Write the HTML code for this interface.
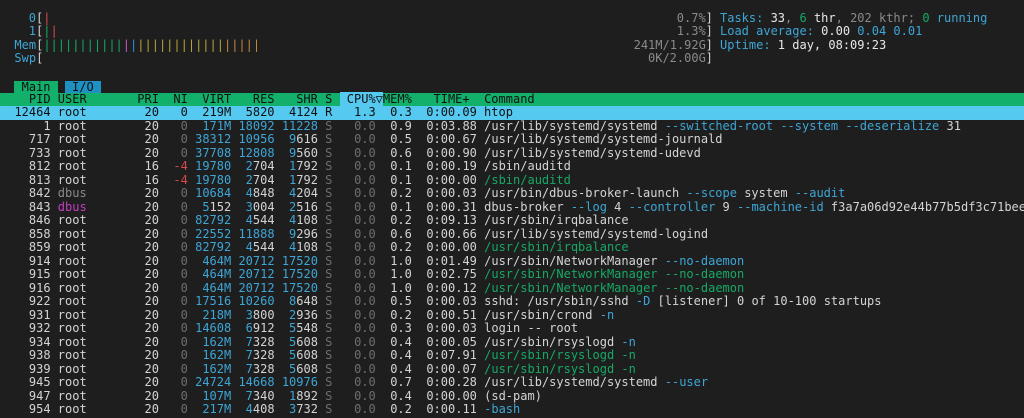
<!DOCTYPE html>
<html><head><meta charset="utf-8"><style>
html,body{margin:0;padding:0;background:#1e1e1e;width:1024px;height:418px;overflow:hidden}
body{font-family:"DejaVu Sans Mono","Liberation Mono",monospace;font-size:12px;color:#d4d4d4}
.l{position:absolute;left:0;height:13.5px;line-height:13.5px;white-space:pre;width:1024px}
.a{position:absolute;top:0;white-space:pre}
.c{color:#3ea6d6}.d{color:#6e6e6e}.g{color:#17a865}.r{color:#d84a4a}.m{color:#c23fc2}.gr{color:#8a8a8a}
.w{color:#e8e8e8}.y{color:#b4a43a}.o{color:#c0883a}.bl{color:#2f8fd0}.mg{color:#c05ac0}
.hdr{background:#13b06b;color:#101010}
.sel{background:#55c9ef;color:#101010}
</style></head><body>

<div class="l" style="top:11.5px"><span class="a" style="left:28.8px"><span class="c">0</span>[<span class="r">|</span></span><span class="a gr" style="left:676.8px">0.7%</span><span class="a" style="left:705.6px">]</span><span class="a" style="left:720px"><span class="c">Tasks: </span><span class="w">33</span><span class="gr">, </span><span class="g">6</span><span class="w"> thr</span><span class="gr">, 202 kthr; </span><span class="g">0</span><span class="c"> running</span></span></div>
<div class="l" style="top:25px"><span class="a" style="left:28.8px"><span class="c">1</span>[<span class="g">|</span><span class="r">|</span></span><span class="a gr" style="left:676.8px">1.3%</span><span class="a" style="left:705.6px">]</span><span class="a" style="left:720px"><span class="c">Load average: </span><span class="w">0.00 </span><span class="c">0.04 0.01</span></span></div>
<div class="l" style="top:38.5px"><span class="a" style="left:14.4px"><span class="c">Mem</span>[<span class="g">|||||||||||</span><span class="mg">|</span><span class="bl">|</span><span class="y">||||||||||||</span><span class="o">|||||</span></span><span class="a gr" style="left:633.6px">241M/1.92G</span><span class="a" style="left:705.6px">]</span><span class="a" style="left:720px"><span class="c">Uptime: </span><span class="w">1 day, 08:09:23</span></span></div>
<div class="l" style="top:52px"><span class="a" style="left:14.4px"><span class="c">Swp</span>[</span><span class="a gr" style="left:648px">0K/2.00G</span><span class="a" style="left:705.6px">]</span></div>

<div class="l" style="top:79px"><span class="a" style="left:14.4px;top:1.5px;height:12px;line-height:12px;width:43.2px;background:#13b06b;color:#101010"> Main</span><span class="a" style="left:64.8px;top:1.5px;height:12px;line-height:12px;width:36px;background:#1f90c2;color:#101010"> I/O</span></div>

<div class="l hdr" style="top:92.5px">    PID USER       PRI  NI  VIRT   RES   SHR S <span style="background:#55c9ef"> CPU%▽</span>MEM%   TIME+  Command</div>
<div class="l sel" style="top:106px">  12464 root        20   0  219M  5820  4124 R   1.3  0.3  0:00.09 htop</div>
<div class="l" style="top:119.5px">      1 root        20<span class="d">   0</span> <span class="c"> 171M</span> <span class="c">18092</span> <span class="c">11228</span> <span class="d">S   0.0</span>  0.9  0:03.88 /usr/lib/systemd/systemd<span class="c"> --switched-root --system --deserialize</span> 31</div>
<div class="l" style="top:133px">    717 root        20<span class="d">   0</span> <span class="c">38312</span> <span class="c">10956</span>  <span class="c">9</span>616 <span class="d">S   0.0</span>  0.5  0:00.67 /usr/lib/systemd/systemd-journald</div>
<div class="l" style="top:146.5px">    733 root        20<span class="d">   0</span> <span class="c">37708</span> <span class="c">12808</span>  <span class="c">9</span>560 <span class="d">S   0.0</span>  0.6  0:00.90 /usr/lib/systemd/systemd-udevd</div>
<div class="l" style="top:160px">    812 root        16<span class="r">  -4</span> <span class="c">19780</span>  <span class="c">2</span>704  <span class="c">1</span>792 <span class="d">S   0.0</span>  0.1  0:00.19 /sbin/auditd</div>
<div class="l" style="top:173.5px">    813 root        16<span class="r">  -4</span> <span class="c">19780</span>  <span class="c">2</span>704  <span class="c">1</span>792 <span class="d">S   0.0</span>  0.1  0:00.00 <span class="g">/sbin/auditd</span></div>
<div class="l" style="top:187px">    842 <span class="gr">dbus</span>        20<span class="d">   0</span> <span class="c">10684</span>  <span class="c">4</span>848  <span class="c">4</span>204 <span class="d">S   0.0</span>  0.2  0:00.03 /usr/bin/dbus-broker-launch<span class="c"> --scope</span> system<span class="c"> --audit</span></div>
<div class="l" style="top:200.5px">    843 <span class="m">dbus</span>        20<span class="d">   0</span>  <span class="c">5</span>152  <span class="c">3</span>004  <span class="c">2</span>516 <span class="d">S   0.0</span>  0.1  0:00.31 dbus-broker<span class="c"> --log</span> 4<span class="c"> --controller</span> 9<span class="c"> --machine-id</span> f3a7a06d92e44b77b5df3c71bee</div>
<div class="l" style="top:214px">    846 root        20<span class="d">   0</span> <span class="c">82792</span>  <span class="c">4</span>544  <span class="c">4</span>108 <span class="d">S   0.0</span>  0.2  0:09.13 /usr/sbin/irqbalance</div>
<div class="l" style="top:227.5px">    858 root        20<span class="d">   0</span> <span class="c">22552</span> <span class="c">11888</span>  <span class="c">9</span>296 <span class="d">S   0.0</span>  0.6  0:00.66 /usr/lib/systemd/systemd-logind</div>
<div class="l" style="top:241px">    859 root        20<span class="d">   0</span> <span class="c">82792</span>  <span class="c">4</span>544  <span class="c">4</span>108 <span class="d">S   0.0</span>  0.2  0:00.00 <span class="g">/usr/sbin/irqbalance</span></div>
<div class="l" style="top:254.5px">    914 root        20<span class="d">   0</span> <span class="c"> 464M</span> <span class="c">20712</span> <span class="c">17520</span> <span class="d">S   0.0</span>  1.0  0:01.49 /usr/sbin/NetworkManager<span class="c"> --no-daemon</span></div>
<div class="l" style="top:268px">    915 root        20<span class="d">   0</span> <span class="c"> 464M</span> <span class="c">20712</span> <span class="c">17520</span> <span class="d">S   0.0</span>  1.0  0:02.75 <span class="g">/usr/sbin/NetworkManager --no-daemon</span></div>
<div class="l" style="top:281.5px">    916 root        20<span class="d">   0</span> <span class="c"> 464M</span> <span class="c">20712</span> <span class="c">17520</span> <span class="d">S   0.0</span>  1.0  0:00.12 <span class="g">/usr/sbin/NetworkManager --no-daemon</span></div>
<div class="l" style="top:295px">    922 root        20<span class="d">   0</span> <span class="c">17516</span> <span class="c">10260</span>  <span class="c">8</span>648 <span class="d">S   0.0</span>  0.5  0:00.03 sshd: /usr/sbin/sshd<span class="c"> -D</span> [listener] 0 of 10-100 startups</div>
<div class="l" style="top:308.5px">    931 root        20<span class="d">   0</span> <span class="c"> 218M</span>  <span class="c">3</span>800  <span class="c">2</span>936 <span class="d">S   0.0</span>  0.2  0:00.51 /usr/sbin/crond<span class="c"> -n</span></div>
<div class="l" style="top:322px">    932 root        20<span class="d">   0</span> <span class="c">14608</span>  <span class="c">6</span>912  <span class="c">5</span>548 <span class="d">S   0.0</span>  0.3  0:00.03 login -- root</div>
<div class="l" style="top:335.5px">    934 root        20<span class="d">   0</span> <span class="c"> 162M</span>  <span class="c">7</span>328  <span class="c">5</span>608 <span class="d">S   0.0</span>  0.4  0:00.05 /usr/sbin/rsyslogd<span class="c"> -n</span></div>
<div class="l" style="top:349px">    938 root        20<span class="d">   0</span> <span class="c"> 162M</span>  <span class="c">7</span>328  <span class="c">5</span>608 <span class="d">S   0.0</span>  0.4  0:07.91 <span class="g">/usr/sbin/rsyslogd -n</span></div>
<div class="l" style="top:362.5px">    939 root        20<span class="d">   0</span> <span class="c"> 162M</span>  <span class="c">7</span>328  <span class="c">5</span>608 <span class="d">S   0.0</span>  0.4  0:00.07 <span class="g">/usr/sbin/rsyslogd -n</span></div>
<div class="l" style="top:376px">    945 root        20<span class="d">   0</span> <span class="c">24724</span> <span class="c">14668</span> <span class="c">10976</span> <span class="d">S   0.0</span>  0.7  0:00.28 /usr/lib/systemd/systemd<span class="c"> --user</span></div>
<div class="l" style="top:389.5px">    947 root        20<span class="d">   0</span> <span class="c"> 107M</span>  <span class="c">7</span>340  <span class="c">1</span>892 <span class="d">S   0.0</span>  0.4  0:00.00 (sd-pam)</div>
<div class="l" style="top:403px">    954 root        20<span class="d">   0</span> <span class="c"> 217M</span>  <span class="c">4</span>408  <span class="c">3</span>732 <span class="d">S   0.0</span>  0.2  0:00.11 <span class="c">-bash</span></div>

</body></html>
